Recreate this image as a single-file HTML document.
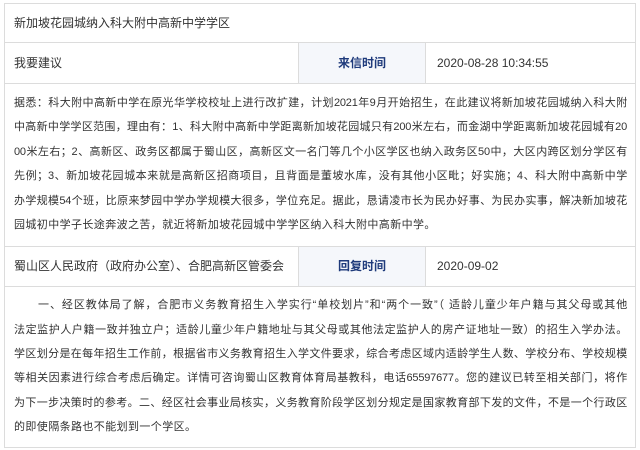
<!DOCTYPE html>
<html><head><meta charset="utf-8"><style>
body{margin:0;width:640px;height:450px;background:#fff;position:relative;overflow:hidden;font-family:"Liberation Sans","Noto Sans CJK SC",sans-serif;font-size:12px;color:#333}
.h{position:absolute;left:4px;width:631px;height:1px;background:#dcdcdc}
.v{position:absolute;width:1px;background:#dcdcdc}
.t{position:absolute;white-space:nowrap;line-height:14px}
.hd{position:absolute;left:299px;width:126px;background:#f5f7fb;color:#1e3a7b;font-weight:bold;text-align:center}
.ln{position:absolute;left:14px;width:613px;white-space:nowrap;text-align:justify;text-align-last:justify;line-height:14px;font-size:11px;letter-spacing:-0.2px}
.nl{text-align-last:left;letter-spacing:0.4px}
</style></head><body>
<div class="h" style="top:3px"></div>
<div class="h" style="top:42px"></div>
<div class="h" style="top:83px"></div>
<div class="h" style="top:246px"></div>
<div class="h" style="top:286px"></div>
<div class="h" style="top:447px"></div>
<div class="v" style="left:4px;top:3px;height:445px"></div>
<div class="v" style="left:635px;top:3px;height:445px"></div>
<div class="hd" style="top:43px;height:40px;line-height:40px">来信时间</div>
<div class="hd" style="top:247px;height:39px;line-height:39px">回复时间</div>
<div class="v" style="left:298px;top:42px;height:41px"></div>
<div class="v" style="left:425px;top:42px;height:41px"></div>
<div class="v" style="left:298px;top:246px;height:40px"></div>
<div class="v" style="left:425px;top:246px;height:40px"></div>
<div class="t" style="left:14px;top:16px">新加坡花园城纳入科大附中高新中学学区</div>
<div class="t" style="left:14px;top:56px">我要建议</div>
<div class="t" style="left:437px;top:56px">2020-08-28 10:34:55</div>
<div class="ln" style="top:96px">据悉：科大附中高新中学在原光华学校校址上进行改扩建，计划2021年9月开始招生，在此建议将新加坡花园城纳入科大附</div>
<div class="ln" style="top:120px">中高新中学学区范围，理由有：1、科大附中高新中学距离新加坡花园城只有200米左右，而金湖中学距离新加坡花园城有20</div>
<div class="ln" style="top:145px">00米左右；2、高新区、政务区都属于蜀山区，高新区文一名门等几个小区学区也纳入政务区50中，大区内跨区划分学区有</div>
<div class="ln" style="top:169px">先例；3、新加坡花园城本来就是高新区招商项目，且背面是董坡水库，没有其他小区毗；好实施；4、科大附中高新中学</div>
<div class="ln" style="top:194px">办学规模54个班，比原来梦园中学办学规模大很多，学位充足。据此，恳请凌市长为民办好事、为民办实事，解决新加坡花</div>
<div class="ln nl" style="top:218px">园城初中学子长途奔波之苦，就近将新加坡花园城中学学区纳入科大附中高新中学。</div>
<div class="t" style="left:14px;top:259px">蜀山区人民政府（政府办公室）、合肥高新区管委会</div>
<div class="t" style="left:437px;top:259px">2020-09-02</div>
<div class="ln" style="left:38px;width:589px;top:298px">一、经区教体局了解，合肥市义务教育招生入学实行“单校划片”和“两个一致”（ 适龄儿童少年户籍与其父母或其他</div>
<div class="ln" style="top:323px">法定监护人户籍一致并独立户；适龄儿童少年户籍地址与其父母或其他法定监护人的房产证地址一致）的招生入学办法。</div>
<div class="ln" style="top:347px">学区划分是在每年招生工作前，根据省市义务教育招生入学文件要求，综合考虑区域内适龄学生人数、学校分布、学校规模</div>
<div class="ln" style="top:371px">等相关因素进行综合考虑后确定。详情可咨询蜀山区教育体育局基教科，电话65597677。您的建议已转至相关部门，将作</div>
<div class="ln" style="top:396px">为下一步决策时的参考。二、经区社会事业局核实，义务教育阶段学区划分规定是国家教育部下发的文件，不是一个行政区</div>
<div class="ln nl" style="top:420px">的即使隔条路也不能划到一个学区。</div>
</body></html>
